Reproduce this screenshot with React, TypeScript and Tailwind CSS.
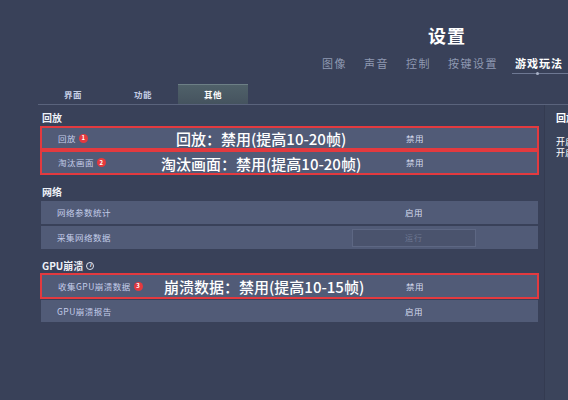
import type { ReactNode } from "react";

const FONT = { fontFamily: '"Noto Sans CJK SC", "Noto Sans", sans-serif' };

function Badge({ n }: { n: number }) {
  return (
    <span className="ml-[3px] inline-flex h-[9px] w-[9px] items-center justify-center rounded-full bg-[#e5393e] text-[6px] font-bold leading-none text-white">
      {n}
    </span>
  );
}

interface RowProps {
  label: string;
  badge?: number;
  value?: string;
  button?: string;
  red?: boolean;
  h: string;
  note?: string;
  noteLeft?: string;
}

function Row({ label, badge, value, button, red, h, note, noteLeft }: RowProps) {
  return (
    <div
      className={`relative grid grid-cols-[295px_1fr] items-center bg-[#515b77] pl-[16px] ${h} ${
        red ? "-mx-[1px] border-[2.5px] border-[#e33a3f] pl-[14px]" : ""
      }`}
    >
      <div className="flex items-center text-[8.5px] leading-none tracking-[0.5px] text-[#c4cdea]">
        {label}
        {badge && <Badge n={badge} />}
      </div>
      {button ? (
        <div className="flex h-[18px] w-[124px] items-center justify-center border border-[#5d6783] bg-[#4a536d] text-[8px] tracking-[1px] text-[#6d7792]">
          {button}
        </div>
      ) : (
        <div className="pl-[53px] text-[8.5px] leading-none tracking-[0.5px] text-[#d6dcef]">{value}</div>
      )}
      {note && (
        <div
          className={`absolute top-1/2 -translate-y-1/2 whitespace-nowrap text-[15px] font-medium leading-none text-white ${noteLeft}`}
        >
          {note}
        </div>
      )}
    </div>
  );
}

function Section({ title, className, children }: { title: ReactNode; className?: string; children: ReactNode }) {
  return (
    <section className={className}>
      <div className="flex h-[14px] items-center pl-[1px] text-[10px] font-bold leading-none text-[#eef1f8]">{title}</div>
      {children}
    </section>
  );
}

export default function App() {
  const nav = ["图像", "声音", "控制", "按键设置"];
  const tabs = ["界面", "功能", "其他"];

  return (
    <div className="flex h-[400px] w-[568px] flex-col overflow-hidden bg-[#394159]" style={FONT}>
      <header className="pt-[26px]">
        <div className="pl-[428px] text-[18px] font-bold leading-[18px] tracking-[1px] text-white">设置</div>
        <nav className="mt-[14px] flex gap-[17px] pl-[322px] text-[11px] leading-[11px] tracking-[1.5px]">
          {nav.map((n) => (
            <span key={n} className="whitespace-nowrap text-[#8f99b2]">
              {n}
            </span>
          ))}
          <span className="relative whitespace-nowrap font-bold tracking-[1px] text-white">
            游戏玩法
            <span className="absolute -left-[3px] -right-[10px] top-[15px] h-px bg-[#6e7893]" />
            <span className="absolute left-[21px] top-[14px] h-[3px] w-[3px] rounded-full bg-[#aab3c9]" />
          </span>
        </nav>
      </header>

      <div className="ml-[38px] mt-[15px] flex h-[21px] border-b border-[#5a637c]">
        {tabs.map((t, i) =>
          i === 2 ? (
            <div
              key={t}
              className="flex w-[70px] items-center justify-center border-t border-[#6d7f86] bg-gradient-to-b from-[#506169] to-[#45535f] text-[8.5px] font-bold tracking-[0.5px] text-white"
            >
              {t}
            </div>
          ) : (
            <div
              key={t}
              className="flex w-[70px] items-center justify-center text-[8.5px] font-bold tracking-[0.5px] text-[#c6cee6]"
            >
              {t}
            </div>
          )
        )}
      </div>

      <div className="flex flex-1">
        <main className="w-[545px] border-r border-[#343b51] pl-[41px] pr-[6px]">
          <Section title="回放" className="mt-[6px]">
            <div className="mt-[1px]">
              <Row label="回放" badge={1} value="禁用" red h="h-[24px]" note="回放：禁用(提高10-20帧)" noteLeft="left-[134px]" />
              <Row label="淘汰画面" badge={2} value="禁用" red h="h-[25px]" note="淘汰画面：禁用(提高10-20帧)" noteLeft="left-[119px]" />
            </div>
          </Section>

          <Section title="网络" className="mt-[10px]">
            <div className="mt-[2px] flex flex-col gap-[2px]">
              <Row label="网络参数统计" value="启用" h="h-[23px]" />
              <Row label="采集网络数据" button="运行" h="h-[23px]" />
            </div>
          </Section>

          <Section
            title={
              <span className="flex items-center">
                GPU崩溃
                <span className="ml-[3px] inline-flex h-[8px] w-[8px] items-center justify-center rounded-full border border-[#dfe4f0] text-[5.5px] font-bold italic leading-none">
                  i
                </span>
              </span>
            }
            className="mt-[10px]"
          >
            <div className="flex flex-col gap-[1px]">
              <Row label="收集GPU崩溃数据" badge={3} value="禁用" red h="h-[26px]" note="崩溃数据：禁用(提高10-15帧)" noteLeft="left-[122px]" />
              <Row label="GPU崩溃报告" value="启用" h="h-[22px]" />
            </div>
          </Section>
        </main>

        <aside className="min-w-0 flex-1 overflow-hidden whitespace-nowrap bg-[#3b445b] pl-[11px] pt-[6px] text-white">
          <div className="h-[14px] text-[10px] font-bold leading-[14px]">回放</div>
          <div className="mt-[11px] text-[9px] leading-[11px]">开启</div>
          <div className="text-[9px] leading-[11px]">开启</div>
        </aside>
      </div>
    </div>
  );
}
